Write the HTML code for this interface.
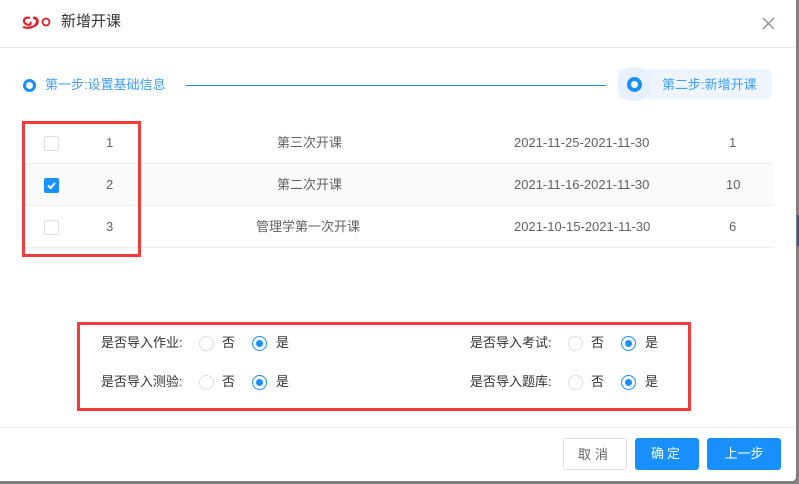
<!DOCTYPE html>
<html><head><meta charset="utf-8"><style>
*{margin:0;padding:0;box-sizing:border-box}
body{width:799px;height:484px;background:#7f7f7f;position:relative;overflow:hidden;font-family:"Liberation Sans","Noto Sans CJK SC",sans-serif;font-size:13px;color:#606266}
.dlg{position:absolute;left:0;top:0;width:796px;height:481px;background:#fff;border-radius:0 0 4px 0}
.abs{position:absolute}
.row{position:absolute;left:22px;width:751px;height:42px;border-bottom:1px solid #ebeef5}
.row span{position:absolute;top:13px;line-height:16px}
.cb{position:absolute;left:22px;top:14px;width:15px;height:15px;border:1px solid #dcdfe6;border-radius:2px;background:#fff}
.cb.on{background:#1890ff;border-color:#1890ff}
.rd{position:absolute;width:15px;height:15px;border-radius:50%;border:1px solid #dcdfe6;background:#fff}
.rd.on{border-color:#1890ff}
.rd.on::after{content:"";position:absolute;left:3px;top:3px;width:7px;height:7px;border-radius:50%;background:#1890ff}
.lab{position:absolute;color:#333;font-size:13px;line-height:16px}
.btn{position:absolute;top:438px;height:32px;border-radius:3px;font-size:13px;text-align:center;line-height:32px}
</style></head><body>
<div class="abs" style="left:797px;top:215px;width:2px;height:31px;background:#2a58a8"></div>
<div class="dlg">
<svg class="abs" style="left:20px;top:14px" width="34" height="18" viewBox="0 0 34 18"><path d="M10 4 C4 2 2 8 6 10 C9 12 12 10 10 8 M3 13 C8 15 14 13 17 10 C19 6 16 3 13 4 M13 4 C17 4 19 8 15 11" stroke="#e01e2d" stroke-width="2.2" fill="none"/><circle cx="26" cy="8" r="3.5" stroke="#e01e2d" stroke-width="1.8" fill="none"/></svg>
<div class="abs" style="left:61px;top:12px;font-size:15px;color:#303133;line-height:20px">新增开课</div>
<svg class="abs" style="left:762px;top:17px" width="13" height="13" viewBox="0 0 13 13"><path d="M1 1 L12 12 M12 1 L1 12" stroke="#909399" stroke-width="1.4"/></svg>
<div class="abs" style="left:0;top:47px;width:796px;height:1px;background:#e6e6e6"></div>
<div class="abs" style="left:23px;top:79px;width:13px;height:13px;border-radius:50%;border:3px solid #1890ff"></div>
<div class="abs" style="left:45px;top:77px;color:#409eff;font-size:13px;line-height:16px">第一步:设置基础信息</div>
<div class="abs" style="left:186px;top:85px;width:420px;height:1px;background:#1890ff"></div>
<div class="abs" style="left:618px;top:69px;width:154px;height:30px;border-radius:6px;background:#eef5ff"></div>
<div class="abs" style="left:618px;top:67px;width:34px;height:34px;border-radius:50%;background:#e6f0ff"></div>
<div class="abs" style="left:627px;top:77px;width:15px;height:15px;border-radius:50%;border:4px solid #1890ff;background:#fff"></div>
<div class="abs" style="left:662px;top:77px;color:#409eff;font-size:13px;line-height:16px">第二步:新增开课</div>

<div class="row" style="top:122px"><div class="cb"></div><span style="left:84px">1</span><span style="left:255px">第三次开课</span><span style="left:492px">2021-11-25-2021-11-30</span><span style="left:707px">1</span></div>
<div class="row" style="top:164px;background:#fafafa"><div class="cb on"><svg width="13" height="13" viewBox="0 0 13 13"><path d="M3 6.5 L5.5 9 L10 4" stroke="#fff" stroke-width="2" fill="none"/></svg></div><span style="left:84px">2</span><span style="left:255px">第二次开课</span><span style="left:492px">2021-11-16-2021-11-30</span><span style="left:704px">10</span></div>
<div class="row" style="top:206px"><div class="cb"></div><span style="left:84px">3</span><span style="left:234px">管理学第一次开课</span><span style="left:492px">2021-10-15-2021-11-30</span><span style="left:707px">6</span></div>
<div class="abs" style="left:22px;top:121px;width:119px;height:136px;border:3px solid #f23c3c"></div>

<div class="abs" style="left:77px;top:322px;width:614px;height:89px;border:3px solid #f23c3c"></div>
<div class="lab" style="left:101px;top:335px">是否导入作业:</div><div class="rd" style="left:199px;top:336px"></div><div class="lab" style="left:222px;top:335px">否</div><div class="rd on" style="left:252px;top:336px"></div><div class="lab" style="left:276px;top:335px">是</div>
<div class="lab" style="left:101px;top:374px">是否导入测验:</div><div class="rd" style="left:199px;top:375px"></div><div class="lab" style="left:222px;top:374px">否</div><div class="rd on" style="left:252px;top:375px"></div><div class="lab" style="left:276px;top:374px">是</div>
<div class="lab" style="left:470px;top:335px">是否导入考试:</div><div class="rd" style="left:568px;top:336px"></div><div class="lab" style="left:591px;top:335px">否</div><div class="rd on" style="left:621px;top:336px"></div><div class="lab" style="left:645px;top:335px">是</div>
<div class="lab" style="left:470px;top:374px">是否导入题库:</div><div class="rd" style="left:568px;top:375px"></div><div class="lab" style="left:591px;top:374px">否</div><div class="rd on" style="left:621px;top:375px"></div><div class="lab" style="left:645px;top:374px">是</div>

<div class="abs" style="left:0;top:427px;width:796px;height:1px;background:#e6e6e6"></div>
<div class="btn" style="left:563px;width:64px;border:1px solid #dcdfe6;color:#606266;letter-spacing:4px">取消</div>
<div class="btn" style="left:635px;width:64px;background:#1890ff;color:#fff;letter-spacing:3px">确定</div>
<div class="btn" style="left:707px;width:74px;background:#1890ff;color:#fff">上一步</div>
</div>
</body></html>
